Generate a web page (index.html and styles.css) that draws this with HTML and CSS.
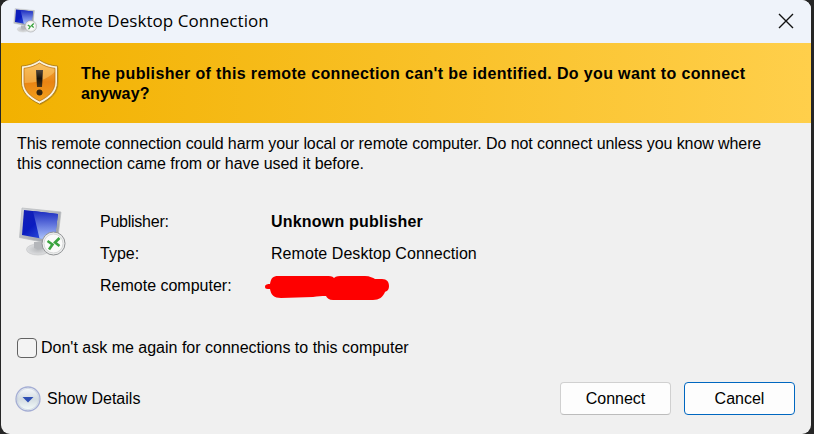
FILE: index.html
```html
<!DOCTYPE html>
<html lang="en">
<head>
<meta charset="utf-8">
<title>Remote Desktop Connection</title>
<link rel="stylesheet" href="styles.css">
</head>
<body>
<svg class="defs" width="0" height="0" aria-hidden="true">
  <defs>
    <linearGradient id="screen" x1="0" y1="0" x2="1" y2="1"><stop offset="0" stop-color="#1420b4"/><stop offset=".4" stop-color="#0a1cc0"/><stop offset="1" stop-color="#4a78ee"/></linearGradient>
    <linearGradient id="glare" x1="0" y1="0" x2="0" y2="1"><stop offset="0" stop-color="#1c2cc0"/><stop offset="1" stop-color="#b4ccff"/></linearGradient>
    <linearGradient id="frame" x1="0" y1="0" x2="1" y2="1"><stop offset="0" stop-color="#d6d8dc"/><stop offset="1" stop-color="#8f9399"/></linearGradient>
    <radialGradient id="foot"><stop offset="0" stop-color="#b8babd"/><stop offset="1" stop-color="#dedfe1"/></radialGradient>
    <linearGradient id="amber" x1="0" y1="0" x2="0" y2="1"><stop offset="0" stop-color="#f6b043"/><stop offset=".5" stop-color="#e98413"/><stop offset="1" stop-color="#f3a11c"/></linearGradient>
    <linearGradient id="mark" x1="0" y1="0" x2="0" y2="1"><stop offset="0" stop-color="#55483a"/><stop offset=".5" stop-color="#17120c"/><stop offset="1" stop-color="#4a3517"/></linearGradient>
    <linearGradient id="orb" x1="0" y1="0" x2="0" y2="1"><stop offset="0" stop-color="#fafcfe"/><stop offset=".5" stop-color="#d3dce2"/><stop offset="1" stop-color="#f8fffc"/></linearGradient>
    <symbol id="computer" viewBox="0 0 48 50">
      <ellipse cx="20" cy="42.500" rx="11.500" ry="5.500" fill="url(#foot)" stroke="#c6c7c9" stroke-width=".7"/>
      <path d="M16 35h12v6q-6 3-12 0z" fill="#b4b6ba"/>
      <path d="M4 1l39 4-4 33L1.500 30.500z" fill="url(#frame)" stroke="#b8babd" stroke-width=".7"/>
      <path d="M6 3l34 4-3.500 27L4 28z" fill="url(#screen)"/>
      <path d="M15 4.100L40 7l-3.500 27-15-2.600z" fill="url(#glare)"/>
      <circle cx="35.500" cy="36.500" r="11.500" fill="#eeefef" stroke="#8f9193"/>
      <circle cx="35.500" cy="36.500" r="9.500" fill="#fafafa" stroke="#d7d8d8"/>
      <path d="M29.500 34l5 3.500-3.500 5M41.500 31l-4.500 4.500 4.500 3.500" fill="none" stroke="#3ba440" stroke-width="2.600"/>
    </symbol>
  </defs>
</svg>
<main class="dialog">
  <header class="titlebar">
    <svg class="app-icon"><use href="#computer"/></svg>
    <h1>Remote Desktop Connection</h1>
    <svg class="close" viewBox="0 0 16 16"><path d="M1 1l14 14M15 1L1 15"/></svg>
  </header>
  <section class="banner">
    <svg class="shield" viewBox="0 0 40 47">
      <path d="M20 2.500C15 6 9 8 2.500 8.500V24c0 10 7 17 18 22 11-6 18-12 18-22V8.500C31 8 25 6 20 2.500z" fill="#926a12" opacity=".45"/>
      <path d="M19.500 1C14.500 4.500 8 6.700 1.500 7v16c0 10 7 17 18 22 11-5 18-12 18-22V7C31 6.700 24.500 4.500 19.500 1z" fill="#fbf3dc" stroke="#a5730f" stroke-width=".8"/>
      <path d="M19.500 4C15 7 9.500 8.800 4 9.300V23c0 8.500 6 14.500 15.500 19C29 37.500 35 31.500 35 23V9.300C29.500 8.800 24 7 19.500 4z" fill="url(#amber)" stroke="#b36a0c" stroke-width=".7"/>
      <path d="M19.500 4.600C15 7.500 9.500 9.300 4.500 9.800V24C15 24 27 21 34.500 13V9.800C29.500 9.300 24 7.500 19.500 4.600z" fill="#ffdc86" opacity=".4"/>
      <path d="M16 11h7l-1 17h-5z" fill="url(#mark)"/>
      <circle cx="19.500" cy="33.500" r="3" fill="#33240f"/>
    </svg>
    <h2><span class="line first">The publisher of this remote connection can't be identified. Do you want to connect</span><span class="line">anyway?</span></h2>
  </section>
  <p class="message"><span class="line first">This remote connection could harm your local or remote computer. Do not connect unless you know where</span><span class="line second">this connection came from or have used it before.</span></p>
  <section class="details">
    <svg class="big-icon"><use href="#computer"/></svg>
    <dl>
      <dt>Publisher:</dt><dd class="publisher">Unknown publisher</dd>
      <dt>Type:</dt><dd class="type">Remote Desktop Connection</dd>
      <dt>Remote computer:</dt>
      <dd><svg class="redaction" viewBox="0 0 124 25"><path d="M0 12c0-3 3-3 5-3C6 3 8 1 13 1h48c4 0 6 0 8 2 2-2 5-2 9-2h22c5 0 8 2 10 3h7c5 0 7 3 7 7s-2 5-4 6c-2 5-6 8-12 8H68c-4 0-6-2-7-4-5 0-8 0-13 1l-32 1c-7 0-10-3-11-9-3 0-5 0-5-2z"/></svg></dd>
    </dl>
  </section>
  <label class="remember"><input type="checkbox"><span>Don't ask me again for connections to this computer</span></label>
  <footer>
    <div class="expander">
      <svg viewBox="0 0 26 26"><circle cx="13" cy="13" r="12" fill="url(#orb)" stroke="#a5aed4" stroke-width="1.300"/><circle cx="13" cy="13" r="10.700" fill="none" stroke="#c9d2df" stroke-width=".8"/><path d="M7.500 11h11L13 16.500z" fill="#2f50b4"/></svg>
      <span>Show Details</span>
    </div>
    <div class="buttons"><button>Connect</button><button class="default">Cancel</button></div>
  </footer>
</main>
</body>
</html>
```
FILE: styles.css
```css
* { box-sizing: border-box; }
body {
  margin: 0;
  height: 434px;
  overflow: hidden;
  padding: 0 3px 0 1px;
  background: #262626;
  color: #000;
  font: 16px/20px "Liberation Sans", Arial, sans-serif;
}
.defs { display: block; position: absolute; }
.dialog {
  height: 434px;
  display: flex;
  flex-direction: column;
  background: #f0f0f0;
  border-radius: 9px;
  overflow: hidden;
}
h1, h2, p, dl, dd { margin: 0; }
.line { display: block; white-space: nowrap; }
.titlebar {
  height: 43px;
  flex: none;
  display: flex;
  align-items: center;
  padding: 0 17px 2px 12px;
  background: #eff3fa;
}
.app-icon { width: 24px; height: 25px; margin-right: 4px; }
h1 { font: 400 17px/24px "Open Sans", "Noto Sans", sans-serif; letter-spacing: .05px; flex: 1; }
.close { width: 16px; height: 16px; fill: none; stroke: #111; stroke-width: 1.4; }
.banner {
  height: 80px;
  flex: none;
  display: flex;
  align-items: flex-start;
  padding: 16px 0 0 19px;
  background: linear-gradient(90deg, #f2b100, #ffcf4b);
}
.shield { width: 40px; height: 47px; margin-right: 21px; }
h2 { font-size: 16px; line-height: 20px; padding-top: 5px; letter-spacing: .15px; }
h2 .first { letter-spacing: .365px; }
.message { padding: 11px 16px 0; }
.message .first { letter-spacing: -.09px; }
.message .second { letter-spacing: -.07px; }
.details { display: flex; padding: 32px 0 0 17px; }
.big-icon { width: 48px; height: 50px; margin: 1px 34px 0 0; }
dl { display: grid; grid-template-columns: 171px auto; grid-auto-rows: 32px; line-height: 32px; }
dt:first-child { letter-spacing: -.25px; }
.publisher { font-weight: 700; letter-spacing: .21px; }
.type { letter-spacing: .05px; }
.redaction { display: block; width: 124px; height: 25px; margin: 5px 0 0 -6px; fill: #fe0000; }
.remember { display: flex; align-items: center; margin: 36px 0 0 16px; height: 20px; }
.remember input {
  appearance: none;
  width: 20px;
  height: 20px;
  margin: 0 4px 0 0;
  border: 1px solid #626262;
  border-radius: 4px;
  background: #f3f3f3;
}
footer { display: flex; justify-content: space-between; padding: 24px 16px 0 14px; }
.expander { display: flex; align-items: center; height: 33px; }
.expander svg { width: 26px; height: 26px; margin-right: 6px; }
.buttons { display: flex; gap: 13px; }
button {
  width: 111px;
  height: 33px;
  padding: 0;
  border: 1px solid #d0d0d0;
  border-bottom-color: #bcbcbc;
  border-radius: 4px;
  background: #fdfdfd;
  color: #000;
  font: inherit;
}
button.default { border-color: #0067c0; }
```
